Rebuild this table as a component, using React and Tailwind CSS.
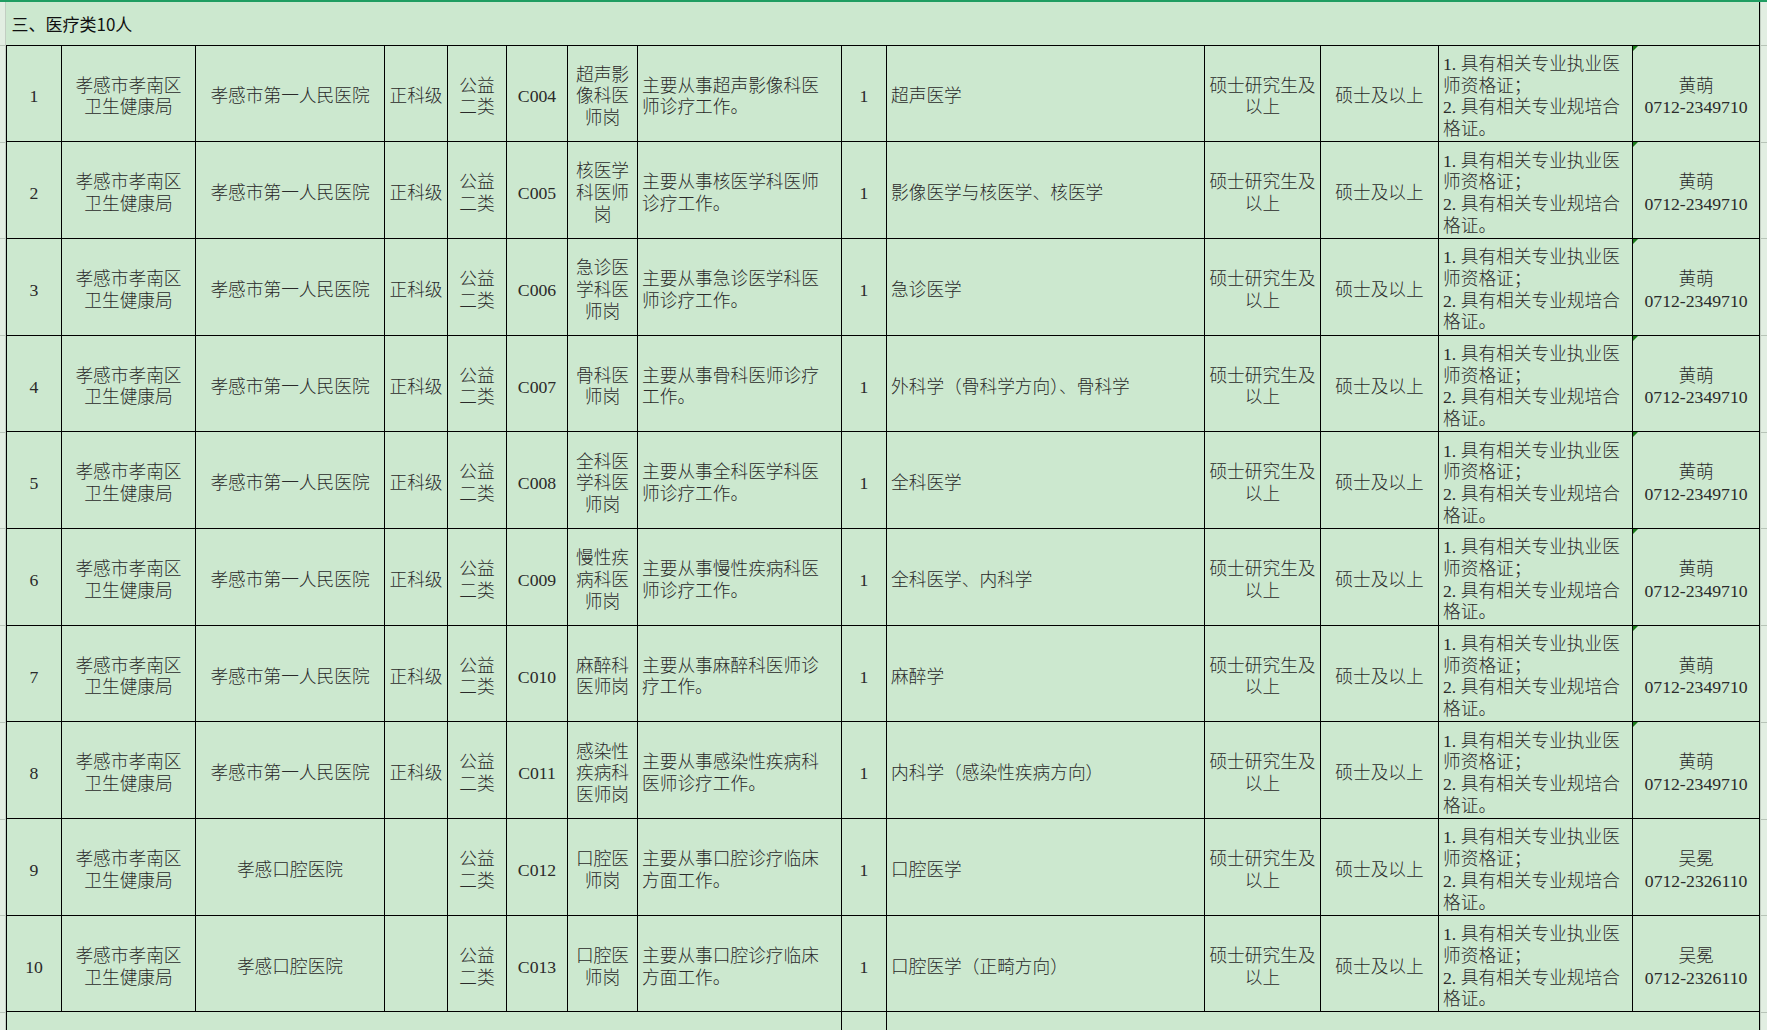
import React from "react";

const serif = { fontFamily: '"Liberation Serif", "Noto Sans CJK SC", serif' };

// column widths measured from the sheet
const cols = [55, 134, 189, 63, 59, 61, 70, 204, 45, 318, 116, 118, 194, 127];

const rows = [
   { code: "C004", job: ["超声影", "像科医", "师岗"], desc: ["主要从事超声影像科医", "师诊疗工作。"], major: "超声医学" },
   { code: "C005", job: ["核医学", "科医师", "岗"], desc: ["主要从事核医学科医师", "诊疗工作。"], major: "影像医学与核医学、核医学" },
   { code: "C006", job: ["急诊医", "学科医", "师岗"], desc: ["主要从事急诊医学科医", "师诊疗工作。"], major: "急诊医学" },
   { code: "C007", job: ["骨科医", "师岗"], desc: ["主要从事骨科医师诊疗", "工作。"], major: "外科学（骨科学方向）、骨科学" },
   { code: "C008", job: ["全科医", "学科医", "师岗"], desc: ["主要从事全科医学科医", "师诊疗工作。"], major: "全科医学" },
   { code: "C009", job: ["慢性疾", "病科医", "师岗"], desc: ["主要从事慢性疾病科医", "师诊疗工作。"], major: "全科医学、内科学" },
   { code: "C010", job: ["麻醉科", "医师岗"], desc: ["主要从事麻醉科医师诊", "疗工作。"], major: "麻醉学" },
   { code: "C011", job: ["感染性", "疾病科", "医师岗"], desc: ["主要从事感染性疾病科", "医师诊疗工作。"], major: "内科学（感染性疾病方向）" },
   { code: "C012", job: ["口腔医", "师岗"], desc: ["主要从事口腔诊疗临床", "方面工作。"], major: "口腔医学", dental: true },
   { code: "C013", job: ["口腔医", "师岗"], desc: ["主要从事口腔诊疗临床", "方面工作。"], major: "口腔医学（正畸方向）", dental: true },
];

const Lines = ({ items }) => (
   <>
      {items.map((t, i) => (
         <div key={i} className="whitespace-nowrap">
            {t}
         </div>
      ))}
   </>
);

// "1." takes a full character cell, as in the sheet's font
const Num = ({ n }) => <span className="inline-block w-[17.7px]">{n}.</span>;

const Req = () => (
   <>
      <div className="whitespace-nowrap">
         <Num n={1} />
         具有相关专业执业医
      </div>
      <div className="whitespace-nowrap">师资格证；</div>
      <div className="whitespace-nowrap">
         <Num n={2} />
         具有相关专业规培合
      </div>
      <div className="whitespace-nowrap">格证。</div>
   </>
);

const td = "border border-black align-middle pt-[8px] text-center";
const tdLeft = "border border-black align-middle pt-[8px] text-left pl-[4px]";

// grey side strip with the gridline ticks of the sheet
const Strip = ({ className }) => (
   <div className={`flex flex-col bg-[#e2eee2] ${className}`}>
      <div className="h-[43px] shrink-0" />
      {rows.map((_, i) => (
         <div key={i} className="h-[96.7px] shrink-0 border-t border-[#b8c4b8]" />
      ))}
      <div className="flex-1 border-t border-[#b8c4b8]" />
   </div>
);

export default function App() {
   return (
      <div className="w-[1767px] h-[1030px] overflow-hidden bg-[#cce8cf] flex flex-col text-[#2a2a2a]">
         <div className="h-[2px] shrink-0 bg-[#1f9d62]" />
         <div className="flex flex-1 min-h-0">
            <Strip className="w-[6px] border-r border-[#c2cec2]" />
            <table
               className="table-fixed border-collapse w-[1753px] self-start text-[17.7px] leading-[21.7px] font-light"
               style={serif}>
               <colgroup>
                  {cols.map((w, i) => (
                     <col key={i} style={{ width: w }} />
                  ))}
               </colgroup>
               <tbody>
                  <tr className="h-[43px]">
                     <td
                        colSpan={14}
                        className="border-r border-black align-middle pl-[5px] pt-[2px] text-[17px] font-normal text-[#111]"
                        style={{ fontFamily: '"Noto Sans CJK SC", "Noto Sans", sans-serif' }}>
                        三、医疗类10人
                     </td>
                  </tr>
                  {rows.map((r, i) => (
                     <tr key={r.code} className="h-[96.7px]">
                        <td className={td}>{i + 1}</td>
                        <td className={td}>
                           <Lines items={["孝感市孝南区", "卫生健康局"]} />
                        </td>
                        <td className={td}>{r.dental ? "孝感口腔医院" : "孝感市第一人民医院"}</td>
                        <td className={td}>{r.dental ? "" : "正科级"}</td>
                        <td className={td}>
                           <Lines items={["公益", "二类"]} />
                        </td>
                        <td className={td}>{r.code}</td>
                        <td className={td}>
                           <Lines items={r.job} />
                        </td>
                        <td className={tdLeft}>
                           <Lines items={r.desc} />
                        </td>
                        <td className={td}>1</td>
                        <td className={tdLeft}>{r.major}</td>
                        <td className={td}>
                           <Lines items={["硕士研究生及", "以上"]} />
                        </td>
                        <td className={td}>硕士及以上</td>
                        <td className={tdLeft}>
                           <Req />
                        </td>
                        <td className={`${td} relative`}>
                           {!r.dental && (
                              <span className="absolute left-0 top-0 w-0 h-0 border-t-[5px] border-r-[5px] border-t-[#1a7a1a] border-r-transparent" />
                           )}
                           <Lines items={r.dental ? ["吴冕", "0712-2326110"] : ["黄萌", "0712-2349710"]} />
                        </td>
                     </tr>
                  ))}
                  <tr className="h-[20px]">
                     <td colSpan={8} className="border-l border-black" />
                     <td className="border-x border-black" />
                     <td colSpan={5} className="border-r border-black" />
                  </tr>
               </tbody>
            </table>
            <Strip className="flex-1 border-l border-[#c2cec2]" />
         </div>
      </div>
   );
}
